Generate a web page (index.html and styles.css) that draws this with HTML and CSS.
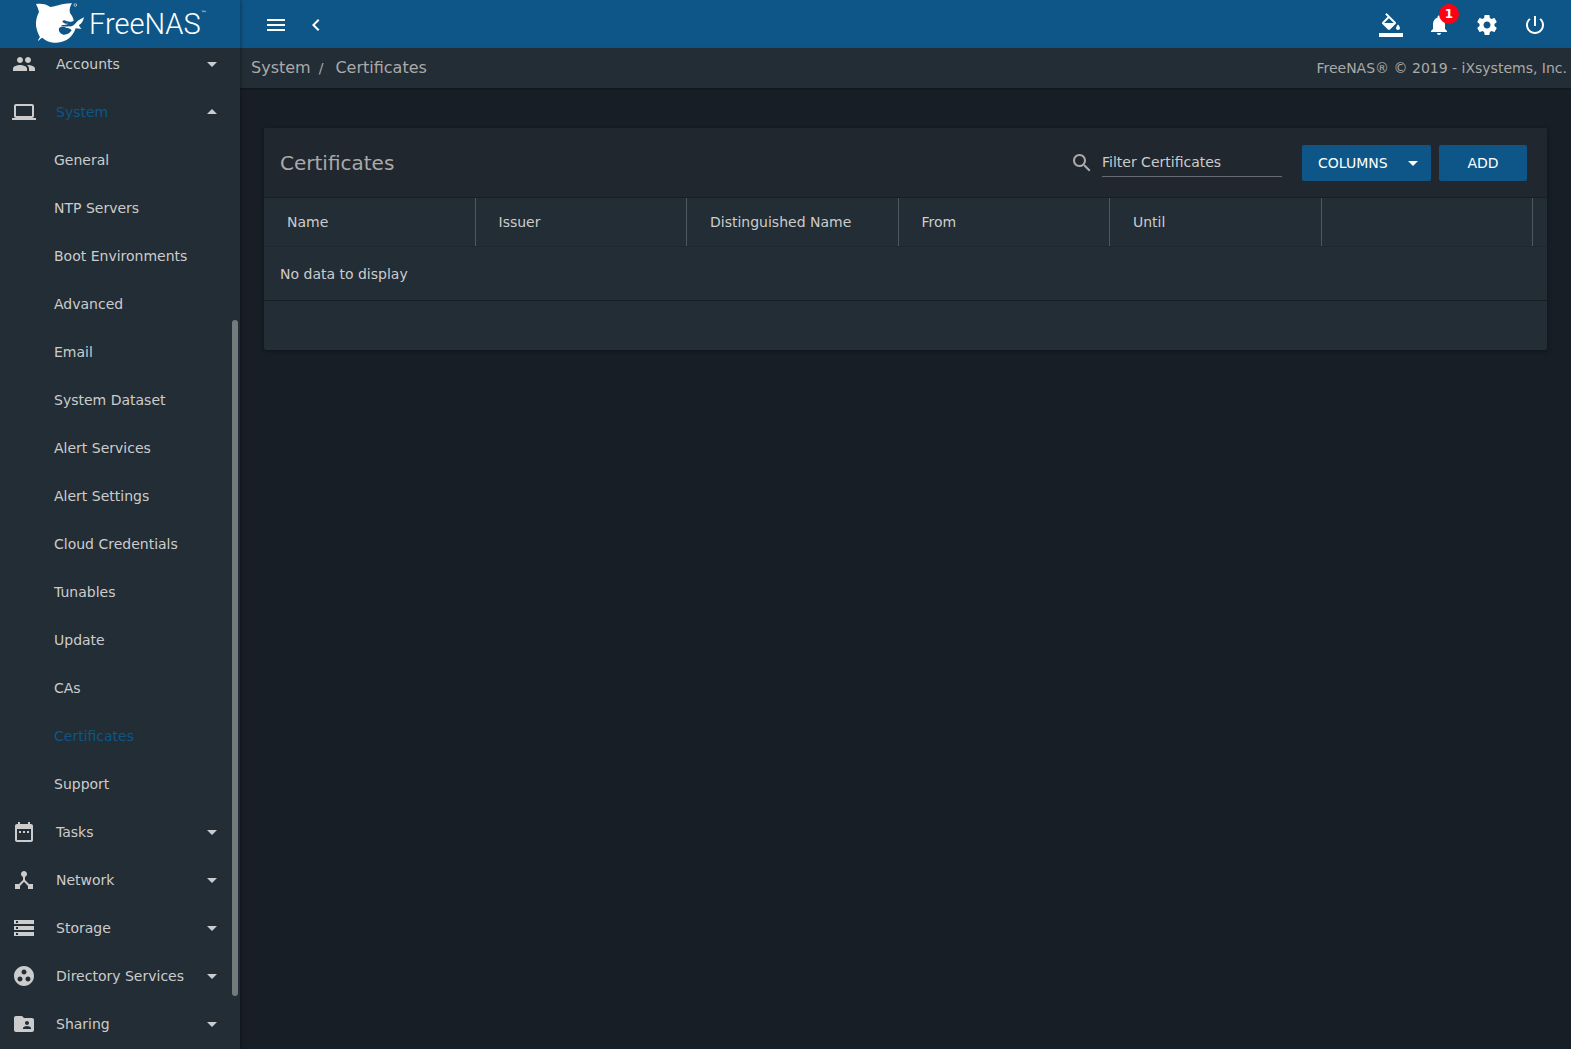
FILE: index.html
```html
<!DOCTYPE html>
<html lang="en">
<head>
<meta charset="utf-8">
<title>FreeNAS - Certificates</title>
<link rel="stylesheet" href="styles.css">
</head>
<body>
<svg class="sprite" aria-hidden="true">
  <symbol id="down" viewBox="0 0 24 24"><path d="M7 10l5 5 5-5z"/></symbol>
  <symbol id="up" viewBox="0 0 24 24"><path d="M7 14l5-5 5 5z"/></symbol>
</svg>
<div class="app">
  <aside class="sidebar">
    <a class="brand" href="#" aria-label="FreeNAS home">
      <svg class="shark" viewBox="0 0 144 120" aria-hidden="true">
        <path d="M0 3C16 0 32 3 43 12C57 12 66 6 78 4C88 2 98 1 108 1C102 10 99 20 102 30C107 37 112 44 113 53C106 58 98 57 91 54C84 50 78 53 80 57C84 62 90 63 96 62C90 66 82 67 74 66C82 70 90 72 98 70C106 72 114 67 120 59C126 52 134 48 144 43C142 54 137 62 129 66C130 71 133 74 137 77C131 78 124 77 119 76C112 98 93 119 61 119C43 119 28 113 19 104C15 105 11 109 7 115C6 109 9 106 12 103C7 92 2 82 0 68C-1 53 3 38 9 27C7 18 4 10 0 3Z" fill="#fff"/>
        <path d="M69 76C76 68 84 70 90 74C97 75 104 77 107 82C102 91 92 96 82 95C73 93 67 85 69 76Z" fill="#0d5687"/>
        <circle cx="118" cy="6" r="4" fill="none" stroke="#fff" stroke-opacity=".6" stroke-width="3"/>
      </svg>
      <span class="wordmark">FreeNAS</span><span class="tm">™</span>
    </a>
    <nav class="nav" aria-label="Main">
      <ul class="menu">
        <li><a class="item" href="#"><svg class="icon" viewBox="0 0 24 24"><path d="M16 11c1.66 0 2.99-1.34 2.99-3S17.66 5 16 5s-3 1.340-3 3 1.340 3 3 3zm-8 0c1.660 0 2.990-1.340 2.990-3S9.660 5 8 5 5 6.340 5 8s1.340 3 3 3zm0 2c-2.330 0-7 1.170-7 3.500V19h14v-2.500c0-2.330-4.670-3.500-7-3.500zm8 0c-.29 0-.62.02-.97.05 1.160.84 1.970 1.970 1.970 3.450V19h6v-2.500c0-2.330-4.670-3.500-7-3.500z"/></svg><span class="label">Accounts</span><svg class="caret"><use href="#down"/></svg></a></li>
        <li><a class="item active" href="#"><svg class="icon" viewBox="0 0 24 24"><path d="M20 18c1.100 0 1.990-.9 1.990-2L22 6c0-1.100-.9-2-2-2H4c-1.100 0-2 .9-2 2v10c0 1.100.9 2 2 2H0v2h24v-2h-4zM4 6h16v10H4V6z"/></svg><span class="label">System</span><svg class="caret"><use href="#up"/></svg></a>
          <ul class="menu">
            <li><a class="item sub" href="#">General</a></li>
            <li><a class="item sub" href="#">NTP Servers</a></li>
            <li><a class="item sub" href="#">Boot Environments</a></li>
            <li><a class="item sub" href="#">Advanced</a></li>
            <li><a class="item sub" href="#">Email</a></li>
            <li><a class="item sub" href="#">System Dataset</a></li>
            <li><a class="item sub" href="#">Alert Services</a></li>
            <li><a class="item sub" href="#">Alert Settings</a></li>
            <li><a class="item sub" href="#">Cloud Credentials</a></li>
            <li><a class="item sub" href="#">Tunables</a></li>
            <li><a class="item sub" href="#">Update</a></li>
            <li><a class="item sub" href="#">CAs</a></li>
            <li><a class="item sub active" href="#" aria-current="page">Certificates</a></li>
            <li><a class="item sub" href="#">Support</a></li>
          </ul>
        </li>
        <li><a class="item" href="#"><svg class="icon" viewBox="0 0 24 24"><path d="M9 11H7v2h2v-2zm4 0h-2v2h2v-2zm4 0h-2v2h2v-2zm2-7h-1V2h-2v2H8V2H6v2H5c-1.110 0-1.990.9-1.990 2L3 20c0 1.100.89 2 2 2h14c1.100 0 2-.9 2-2V6c0-1.100-.9-2-2-2zm0 16H5V9h14v11z"/></svg><span class="label">Tasks</span><svg class="caret"><use href="#down"/></svg></a></li>
        <li><a class="item" href="#"><svg class="icon" viewBox="0 0 24 24"><path d="M17 16l-4-4V8.820C14.160 8.400 15 7.300 15 6c0-1.660-1.340-3-3-3S9 4.340 9 6c0 1.300.84 2.400 2 2.820V12l-4 4H3v5h5v-3.050l4-4.200 4 4.200V21h5v-5h-4z"/></svg><span class="label">Network</span><svg class="caret"><use href="#down"/></svg></a></li>
        <li><a class="item" href="#"><svg class="icon" viewBox="0 0 24 24"><path d="M2 20h20v-4H2v4zm2-3h2v2H4v-2zM2 4v4h20V4H2zm4 3H4V5h2v2zm-4 7h20v-4H2v4zm2-3h2v2H4v-2z"/></svg><span class="label">Storage</span><svg class="caret"><use href="#down"/></svg></a></li>
        <li><a class="item" href="#"><svg class="icon" viewBox="0 0 24 24"><path d="M12 2C6.480 2 2 6.480 2 12s4.480 10 10 10 10-4.480 10-10S17.520 2 12 2zM8 17.500c-1.380 0-2.500-1.120-2.500-2.500s1.120-2.500 2.500-2.500 2.500 1.120 2.500 2.500-1.120 2.500-2.500 2.500zM9.500 8c0-1.380 1.120-2.500 2.500-2.500s2.500 1.120 2.500 2.500-1.120 2.500-2.500 2.500S9.500 9.380 9.500 8zm6.500 9.500c-1.380 0-2.500-1.120-2.500-2.500s1.120-2.500 2.500-2.500 2.500 1.120 2.500 2.500-1.120 2.500-2.500 2.500z"/></svg><span class="label">Directory Services</span><svg class="caret"><use href="#down"/></svg></a></li>
        <li><a class="item" href="#"><svg class="icon" viewBox="0 0 24 24"><path d="M20 6h-8l-2-2H4c-1.100 0-1.990.9-1.990 2L2 18c0 1.100.9 2 2 2h16c1.100 0 2-.9 2-2V8c0-1.100-.9-2-2-2zm-5 3c1.100 0 2 .9 2 2s-.9 2-2 2-2-.9-2-2 .9-2 2-2zm4 8h-8v-1c0-1.330 2.670-2 4-2s4 .67 4 2v1z"/></svg><span class="label">Sharing</span><svg class="caret"><use href="#down"/></svg></a></li>
      </ul>
      <span class="thumb"></span>
    </nav>
  </aside>
  <div class="content">
    <header class="topbar">
      <button class="icon-button" type="button" aria-label="Toggle menu"><svg class="icon" viewBox="0 0 24 24"><path d="M3 18h18v-2H3v2zm0-5h18v-2H3v2zm0-7v2h18V6H3z"/></svg></button>
      <button class="icon-button back" type="button" aria-label="Collapse menu"><svg class="icon" viewBox="0 0 24 24"><path d="M15.410 7.410L14 6l-6 6 6 6 1.410-1.410L10.830 12z"/></svg></button>
      <div class="actions">
        <button class="icon-button" type="button" aria-label="Theme"><svg class="icon" viewBox="0 0 24 24"><path d="M16.560 8.940L7.620 0 6.210 1.410l2.380 2.380-5.150 5.150c-.59.59-.59 1.540 0 2.120l5.500 5.500c.29.29.68.44 1.060.44s.77-.15 1.060-.44l5.500-5.500c.59-.58.59-1.530 0-2.120zM5.210 10L10 5.210 14.790 10H5.210zM19 11.500s-2 2.170-2 3.500c0 1.100.9 2 2 2s2-.9 2-2c0-1.330-2-3.500-2-3.500zM0 20h24v4H0v-4z"/></svg></button>
        <button class="icon-button" type="button" aria-label="Notifications"><svg class="icon" viewBox="0 0 24 24"><path d="M12 22c1.100 0 2-.9 2-2h-4c0 1.100.89 2 2 2zm6-6v-5c0-3.070-1.640-5.640-4.500-6.320V4c0-.83-.67-1.500-1.500-1.500s-1.500.67-1.500 1.500v.68C7.630 5.360 6 7.920 6 11v5l-2 2v1h16v-1l-2-2z"/></svg><span class="badge">1</span></button>
        <button class="icon-button" type="button" aria-label="Settings"><svg class="icon" viewBox="0 0 24 24"><path d="M19.430 12.980c.04-.32.07-.64.07-.98s-.03-.66-.07-.98l2.110-1.650c.19-.15.24-.42.12-.64l-2-3.460c-.12-.22-.39-.3-.61-.22l-2.490 1c-.52-.4-1.080-.73-1.690-.98l-.38-2.650C14.460 2.180 14.250 2 14 2h-4c-.25 0-.46.18-.49.42l-.38 2.650c-.61.25-1.170.59-1.690.98l-2.490-1c-.23-.09-.49 0-.61.22l-2 3.460c-.13.22-.07.49.12.64l2.110 1.650c-.04.32-.07.65-.07.98s.03.66.07.98l-2.110 1.650c-.19.15-.24.42-.12.64l2 3.460c.12.22.39.3.61.22l2.490-1c.52.4 1.080.73 1.690.98l.38 2.650c.03.24.24.42.49.42h4c.25 0 .46-.18.49-.42l.38-2.650c.61-.25 1.170-.59 1.690-.98l2.490 1c.23.09.49 0 .61-.22l2-3.460c.12-.22.07-.49-.12-.64l-2.110-1.650zM12 15.500c-1.930 0-3.500-1.570-3.500-3.500s1.570-3.500 3.500-3.500 3.500 1.570 3.500 3.500-1.570 3.500-3.500 3.500z"/></svg></button>
        <button class="icon-button" type="button" aria-label="Power"><svg class="icon" viewBox="0 0 24 24"><path d="M13 3h-2v10h2V3zm4.830 2.170l-1.420 1.420C17.990 7.860 19 9.810 19 12c0 3.870-3.130 7-7 7s-7-3.130-7-7c0-2.190 1.010-4.140 2.580-5.420L6.170 5.170C4.230 6.820 3 9.260 3 12c0 4.970 4.030 9 9 9s9-4.030 9-9c0-2.740-1.230-5.180-3.170-6.830z"/></svg></button>
      </div>
    </header>
    <div class="crumbs">
      <nav class="trail" aria-label="Breadcrumb"><a href="#">System</a><span class="slash">/</span><a href="#">Certificates</a></nav>
      <span class="copyright">FreeNAS® © 2019 - iXsystems, Inc.</span>
    </div>
    <main class="page">
      <section class="card">
        <div class="card-head">
          <h1 class="title">Certificates</h1>
          <label class="search" for="filter"><svg class="icon" viewBox="0 0 24 24"><path d="M15.500 14h-.79l-.28-.27C15.410 12.590 16 11.110 16 9.500 16 5.910 13.090 3 9.500 3S3 5.910 3 9.500 5.910 16 9.500 16c1.610 0 3.090-.59 4.230-1.570l.27.28v.79l5 4.990L20.490 19l-4.990-5zm-6 0C7.010 14 5 11.990 5 9.500S7.010 5 9.500 5 14 7.010 14 9.500 11.990 14 9.500 14z"/></svg></label>
          <input class="filter" id="filter" type="text" placeholder="Filter Certificates" aria-label="Filter Certificates">
          <button class="button columns" type="button">COLUMNS<svg class="caret"><use href="#down"/></svg></button>
          <button class="button add" type="button">ADD</button>
        </div>
        <table class="table">
          <colgroup><col><col><col><col><col><col><col class="gutter"></colgroup>
          <thead>
            <tr><th>Name</th><th>Issuer</th><th>Distinguished Name</th><th>From</th><th>Until</th><th></th><td></td></tr>
          </thead>
          <tbody>
            <tr><td class="empty" colspan="7">No data to display</td></tr>
          </tbody>
          <tfoot>
            <tr><td class="foot" colspan="7"></td></tr>
          </tfoot>
        </table>
      </section>
    </main>
  </div>
</div>
</body>
</html>
```
FILE: styles.css
```css
:root {
  --primary: #0d5687;
  --bg: #171e26;
  --panel: #232d35;
  --text: #cccccc;
  --muted: #aaaaaa;
}

* { box-sizing: border-box; }

body {
  margin: 0;
  background: var(--bg);
  color: var(--text);
  font: 14px/20px "DejaVu Sans", sans-serif;
}

a { color: inherit; text-decoration: none; }

button, input { font: inherit; color: inherit; }

svg { display: block; fill: currentColor; }

.sprite { display: none; }

.icon, .caret { width: 24px; height: 24px; flex: none; }

.app { display: flex; height: 100vh; overflow: hidden; }

/* Sidebar */
.sidebar {
  display: flex;
  flex-direction: column;
  flex: none;
  width: 240px;
  background: var(--panel);
  box-shadow: 0 0 4px rgba(0, 0, 0, .5);
  z-index: 1;
}

.brand {
  display: flex;
  flex: none;
  height: 48px;
  padding: 3px 0 0 36px;
  background: var(--primary);
  color: #fff;
}

.shark { width: 48px; height: 40px; overflow: visible; }

.wordmark {
  margin-left: 5px;
  font: 300 29px/42px Roboto, sans-serif;
}

.tm { font-size: 6px; line-height: 20px; }

.nav { position: relative; flex: 1; min-height: 0; overflow: hidden; }

.menu { margin: 0; padding: 0; list-style: none; }

.nav > .menu { margin-top: -8px; }

.item {
  display: flex;
  align-items: center;
  height: 48px;
  padding: 0 16px 0 12px;
}

.item.sub { padding-left: 54px; }

.item .label { flex: 1; margin-left: 20px; }

.active { color: var(--primary); }

.active .icon, .active .caret { color: var(--text); }

.thumb {
  position: absolute;
  top: 272px;
  right: 2px;
  width: 6px;
  height: 676px;
  border-radius: 3px;
  background: #757a7d;
}

/* Top bar and breadcrumb */
.content { flex: 1; min-width: 0; }

.topbar {
  display: flex;
  align-items: center;
  height: 48px;
  padding: 2px 12px 0 12px;
  background: var(--primary);
  color: #fff;
}

.icon-button {
  position: relative;
  display: grid;
  place-items: center;
  width: 48px;
  height: 48px;
  padding: 0;
  border: 0;
  background: none;
}

.back { width: 32px; }

.actions { display: flex; margin-left: auto; }

.badge {
  position: absolute;
  top: 3px;
  right: 4px;
  width: 20px;
  height: 20px;
  border-radius: 50%;
  background: #ff0013;
  font-size: 12px;
  font-weight: 700;
  line-height: 20px;
}

.crumbs {
  display: flex;
  align-items: center;
  justify-content: space-between;
  height: 40px;
  padding: 0 4px 0 11px;
  background: var(--panel);
  color: var(--muted);
  box-shadow: 0 1px 2px rgba(0, 0, 0, .3);
}

.trail { font-size: 16px; line-height: 22px; }

.slash { margin: 0 12px 0 8px; font-size: 14px; }

/* Card */
.page { padding: 40px 24px; }

.card {
  overflow: hidden;
  border-radius: 2px;
  background: var(--panel);
  box-shadow: 0 1px 4px rgba(0, 0, 0, .4);
}

.card-head {
  display: flex;
  align-items: center;
  height: 70px;
  padding: 0 20px 0 16px;
  border-bottom: 1px solid var(--bg);
  background: #20272f;
}

.title {
  flex: 1;
  margin: 0;
  color: var(--muted);
  font-size: 20px;
  font-weight: 400;
  line-height: 26px;
}

.search { margin-right: 8px; color: var(--muted); }

.filter {
  width: 180px;
  height: 28px;
  margin-right: 20px;
  padding: 0;
  border: 0;
  border-bottom: 1px solid #666c71;
  background: none;
}

.filter::placeholder { color: var(--text); opacity: 1; }

.button {
  display: flex;
  align-items: center;
  justify-content: center;
  height: 36px;
  padding: 0;
  border: 0;
  border-radius: 2px;
  background: var(--primary);
  color: #fff;
}

.columns {
  justify-content: space-between;
  width: 129px;
  margin-right: 8px;
  padding: 0 6px 0 16px;
}

.add { width: 88px; }

.table { width: 100%; table-layout: fixed; border-spacing: 0; }

.gutter { width: 14px; }

.table th {
  height: 48px;
  padding: 0 23px;
  border-right: 1px solid #50585e;
  font-weight: 400;
  text-align: left;
}

.table .empty {
  height: 54px;
  padding: 0 16px;
  border-top: 1px solid #1f2830;
}

.table .foot {
  height: 50px;
  padding: 0;
  border-top: 1px solid var(--bg);
}
```
